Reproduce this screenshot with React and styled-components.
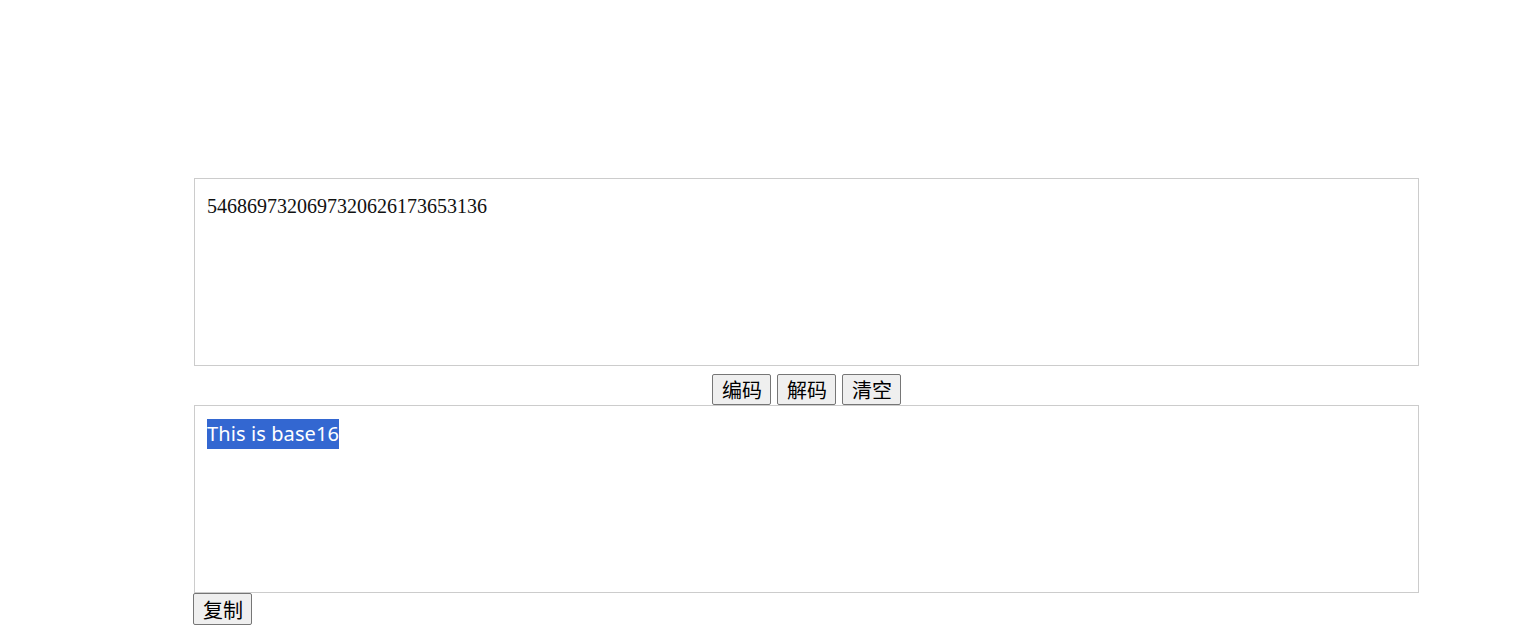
import React from 'react';
import styled, { createGlobalStyle } from 'styled-components';

const GlobalStyle = createGlobalStyle`
  body {
    margin: 0;
    background: #ffffff;
    font-family: 'Noto Sans', 'Noto Sans CJK SC', sans-serif;
  }
`;

const Page = styled.main`
  padding: 178px 0 0 194px;
`;

const Wrapper = styled.div`
  width: 1225px;
  display: flex;
  flex-direction: column;
`;

const Box = styled.div`
  box-sizing: border-box;
  height: 188px;
  border: 1px solid #cccccc;
  padding: ${(p) => (p.$mono ? '15px 12px' : '13px 12px')};
  font-family: ${(p) =>
    p.$mono
      ? "'Liberation Serif', 'Noto Sans CJK SC', serif"
      : "'Noto Sans', 'Noto Sans CJK SC', sans-serif"};
  font-size: 20px;
  line-height: ${(p) => (p.$mono ? '24px' : '30px')};
  color: #111111;
`;

const Selected = styled.span`
  background: #3367d1;
  color: #ffffff;
  display: inline-block;
  height: 30px;
  letter-spacing: 0.1px;
`;

const Actions = styled.div`
  display: flex;
  justify-content: center;
  gap: 6px;
  padding: 8px 0 0;
`;

const Button = styled.button`
  box-sizing: border-box;
  height: ${(p) => (p.$tall ? '32px' : '31px')};
  padding: 1px 8px 1px 9px;
  border: 1px solid #767676;
  border-radius: 2px;
  background: #efefef;
  color: #000000;
  font-family: 'Noto Sans CJK SC', sans-serif;
  font-size: 20px;
  line-height: 27px;
  cursor: pointer;
`;

const Footer = styled.div`
  display: flex;
  margin-left: -1px;
`;

export default function App() {
  return (
    <>
      <GlobalStyle />
      <Page>
        <Wrapper>
          <Box $mono>5468697320697320626173653136</Box>
          <Actions>
            <Button>编码</Button>
            <Button>解码</Button>
            <Button>清空</Button>
          </Actions>
          <Box>
            <Selected>This is base16</Selected>
          </Box>
          <Footer>
            <Button $tall>复制</Button>
          </Footer>
        </Wrapper>
      </Page>
    </>
  );
}
